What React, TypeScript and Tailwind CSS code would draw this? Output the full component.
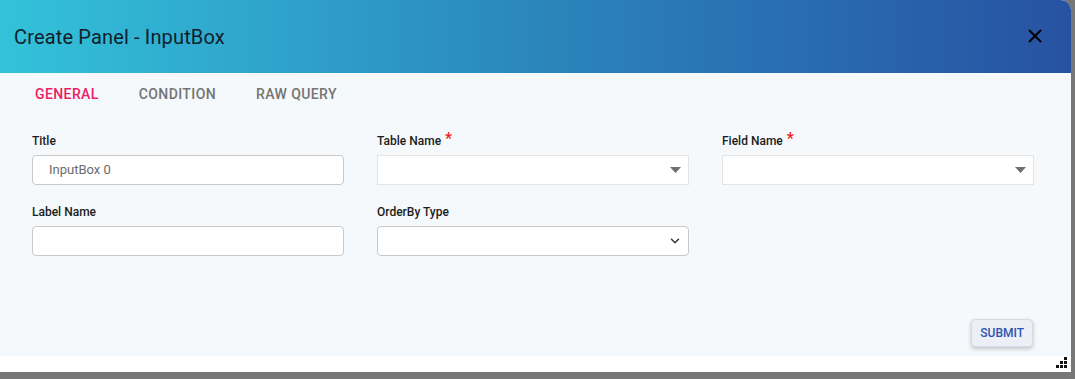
import { ChevronDown } from 'lucide-react';

function Label({ text, required }: { text: string; required?: boolean }) {
  return (
    <div className="mb-[7px] flex h-[14px] items-center text-[12px] font-medium text-[#1c1c1c]">
      {text}
      {required && <span className="ml-[4px] -mt-[4px] text-[16px] leading-none text-[#f01818]">*</span>}
    </div>
  );
}

function TextInput({ value }: { value?: string }) {
  return (
    <div className="flex h-[30px] w-[312px] items-center rounded-[4px] border border-[#c8c8c8] bg-white pl-[16px] text-[13px] text-[#6b6b6b]">
      {value}
    </div>
  );
}

function CaretSelect() {
  return (
    <div className="flex h-[30px] w-[312px] items-center justify-end border border-[#e4e4e4] bg-white pr-[7px]">
      <svg width="11" height="6" viewBox="0 0 11 6">
        <path d="M0 0h11L5.5 6z" fill="#6e6e6e" />
      </svg>
    </div>
  );
}

function NativeSelect() {
  return (
    <div className="flex h-[30px] w-[312px] items-center justify-end rounded-[4px] border border-[#c8c8c8] bg-white pr-[6px]">
      <ChevronDown size={14} strokeWidth={2.6} className="text-[#3a3a3a]" />
    </div>
  );
}

export default function App() {
  return (
    <div className="h-[379px] w-[1075px] bg-[#777777] font-['Roboto',sans-serif]">
      <div className="flex h-[372px] w-[1071px] flex-col overflow-hidden rounded-tr-[10px] bg-white">
        <div className="flex h-[73px] shrink-0 items-center justify-between bg-gradient-to-r from-[#33c2da] via-[#2b86bd] to-[#2752a2] pl-[14px] pr-[29px]">
          <h2 className="text-[20px] tracking-[0.15px] text-[#10202a]">Create Panel - InputBox</h2>
          <svg width="14" height="14" viewBox="0 0 14 14" className="mt-[-2px]">
            <path d="M1 1L13 13M13 1L1 13" stroke="#000" strokeWidth="2" />
          </svg>
        </div>
        <div className="flex h-[283px] flex-col bg-[#f5f9fc]">
          <div className="flex h-[42px] items-center gap-[40px] pl-[35px] text-[14px] font-medium tracking-[0.4px]">
            <span className="text-[#ec1d62]">GENERAL</span>
            <span className="text-[#747474]">CONDITION</span>
            <span className="text-[#747474]">RAW QUERY</span>
          </div>
          <div className="mt-[19px] grid grid-cols-[312px_312px_312px] gap-x-[33px] gap-y-[20px] pl-[32px]">
            <div>
              <Label text="Title" />
              <TextInput value="InputBox 0" />
            </div>
            <div>
              <Label text="Table Name" required />
              <CaretSelect />
            </div>
            <div>
              <Label text="Field Name" required />
              <CaretSelect />
            </div>
            <div>
              <Label text="Label Name" />
              <TextInput />
            </div>
            <div>
              <Label text="OrderBy Type" />
              <NativeSelect />
            </div>
          </div>
          <div className="mt-auto mb-[9px] flex justify-end pr-[38px]">
            <button
              type="button"
              className="h-[28px] rounded-[4px] border border-[#d6dae2] bg-[#eceff5] px-[8px] text-[12px] font-medium text-[#2f52b0] shadow-[0_2px_4px_rgba(0,0,0,0.2)]"
            >
              SUBMIT
            </button>
          </div>
        </div>
        <div className="flex flex-1 items-end justify-end pb-[4px] pr-[4px]">
          <svg width="11" height="11" viewBox="0 0 11 11" fill="#111">
            <rect x="8" y="0" width="3" height="3" />
            <rect x="4" y="4" width="3" height="3" />
            <rect x="8" y="4" width="3" height="3" />
            <rect x="0" y="8" width="3" height="3" />
            <rect x="4" y="8" width="3" height="3" />
            <rect x="8" y="8" width="3" height="3" />
          </svg>
        </div>
      </div>
    </div>
  );
}
